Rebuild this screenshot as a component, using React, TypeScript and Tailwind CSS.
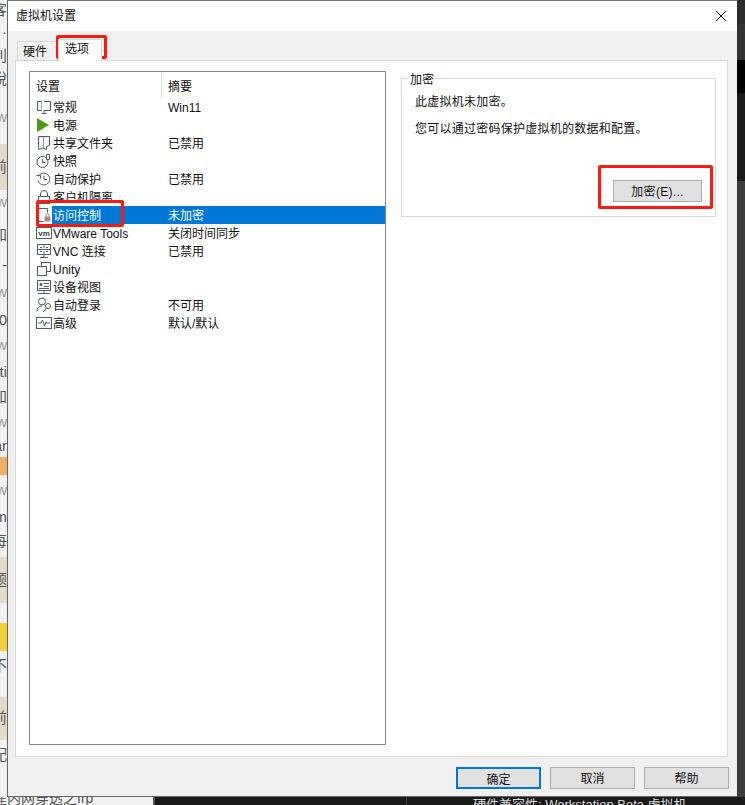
import React from 'react';

const ink = '#4d5b6a';

const icons: Record<string, React.ReactNode> = {
  general: (
    <>
      <path d="M1.5 2.5h4M1.5 2.5v9h4M8 2.5h6.5v9H8M5.5 14.5h5M8 11.5v3" fill="none" stroke={ink} />
      <path d="M5.5 2.5v9" stroke="#9fb0c0" />
    </>
  ),
  power: <polygon points="1,1 13,8 1,15" fill="#4c9a0f" />,
  share: (
    <>
      <path d="M2.5 1.5h11v9l-3 1v3l-4-1.5-4 1.5z" fill="#f4f6f8" stroke={ink} />
      <path d="M7.5 2v11" stroke="#8d9aa6" />
    </>
  ),
  snapshot: (
    <>
      <circle cx="6.5" cy="9" r="5.5" fill="#fff" stroke={ink} />
      <path d="M6.5 6v3.5h3" fill="none" stroke={ink} />
      <path d="M10.5 1.5h3v5h-3z" fill="#fff" stroke={ink} />
    </>
  ),
  protect: (
    <>
      <path d="M3 4.5a6 6 0 1 1-1 5" fill="none" stroke={ink} />
      <path d="M0.5 4.5h4v3" fill="none" stroke={ink} />
      <path d="M8 4.5v4h3" fill="none" stroke={ink} />
    </>
  ),
  lock: (
    <>
      <rect x="2.5" y="7.5" width="11" height="7" fill="#fff" stroke={ink} />
      <path d="M4.5 7.5V5a3.5 3.5 0 0 1 7 0v2.5" fill="none" stroke={ink} />
    </>
  ),
  access: (
    <>
      <path d="M2.5 1.5h9v4M2.5 1.5v13h5" fill="none" stroke={ink} />
      <rect x="8.5" y="9.5" width="6" height="5" fill="#a58a8a" />
      <path d="M10 9.5V8a1.5 1.5 0 0 1 3 0v1.5" fill="none" stroke="#a58a8a" />
    </>
  ),
  tools: (
    <>
      <rect x="0.5" y="2.5" width="15" height="11" fill="#fff" stroke={ink} />
      <text x="8" y="10.5" textAnchor="middle" fontSize="8" fontWeight="700" fill="#33414f" fontFamily="Liberation Sans">vm</text>
    </>
  ),
  vnc: (
    <>
      <rect x="1.5" y="1.5" width="13" height="10" fill="#fff" stroke={ink} />
      <path d="M1.5 6.5h13M8 2v3M8 8v3M4 14.5h8M8 11.5v3M4 4.5h2M10 4.5h2M4 8.5h2M10 8.5h2" fill="none" stroke={ink} />
    </>
  ),
  unity: (
    <>
      <rect x="5.5" y="1.5" width="9" height="9" fill="#fff" stroke={ink} />
      <rect x="1.5" y="5.5" width="9" height="9" fill="#fff" stroke={ink} />
    </>
  ),
  device: (
    <>
      <rect x="1.5" y="1.5" width="13" height="10" fill="#fff" stroke={ink} />
      <circle cx="5" cy="5.5" r="1.5" fill={ink} />
      <path d="M8 4.5h5M8 7.5h5M3 9.5h10M2 14.5h12M8 11.5v3" fill="none" stroke={ink} />
    </>
  ),
  login: (
    <>
      <circle cx="6" cy="4.5" r="3.5" fill="#fff" stroke={ink} />
      <path d="M1 14c0-3 2-5 5-5" fill="none" stroke={ink} />
      <circle cx="12" cy="9" r="2.5" fill="#fff" stroke={ink} />
      <path d="M10.5 11l-3.5 4M8 13l1.5 1" fill="none" stroke={ink} />
    </>
  ),
  advanced: (
    <>
      <rect x="0.5" y="2.5" width="15" height="11" fill="#fff" stroke={ink} />
      <path d="M2 8h3l1.5-3 2 6 1.5-4 1 1h3" fill="none" stroke={ink} />
    </>
  ),
};

const rows = [
  { icon: 'general', name: '常规', value: 'Win11' },
  { icon: 'power', name: '电源', value: '' },
  { icon: 'share', name: '共享文件夹', value: '已禁用' },
  { icon: 'snapshot', name: '快照', value: '' },
  { icon: 'protect', name: '自动保护', value: '已禁用' },
  { icon: 'lock', name: '客户机隔离', value: '' },
  { icon: 'access', name: '访问控制', value: '未加密', selected: true },
  { icon: 'tools', name: 'VMware Tools', value: '关闭时间同步' },
  { icon: 'vnc', name: 'VNC 连接', value: '已禁用' },
  { icon: 'unity', name: 'Unity', value: '' },
  { icon: 'device', name: '设备视图', value: '' },
  { icon: 'login', name: '自动登录', value: '不可用' },
  { icon: 'advanced', name: '高级', value: '默认/默认' },
];

const SettingRow = ({ icon, name, value, selected }: { icon: string; name: string; value: string; selected?: boolean }) => (
  <div className="flex h-[18px] items-center">
    <div className="flex h-[18px] w-[22px] shrink-0 items-center pl-[6px]">
      <svg width="16" height="16" viewBox="0 0 16 16">{icons[icon]}</svg>
    </div>
    <div className={`flex h-[18px] flex-1 items-center pt-[2px] ${selected ? 'bg-[#0078d7] text-white' : ''}`}>
      <span className="w-[116px] shrink-0 pl-px">{name}</span>
      <span>{value}</span>
    </div>
  </div>
);

const DialogButton = ({ label, primary }: { label: string; primary?: boolean }) => (
  <button className={`h-[22px] w-[85px] bg-[#e1e1e1] pt-[2px] text-center text-[12px] ${primary ? 'border-2 border-[#0078d7]' : 'border border-[#adadad]'}`}>
    {label}
  </button>
);

const Crumb = ({ cls, text }: { cls: string; text: string }) => (
  <div className={`flex items-center justify-end overflow-hidden whitespace-nowrap text-[15px] text-[#555] ${cls}`}>
    <span className="shrink-0">{text}</span>
  </div>
);

const App: React.FC = () => {
  return (
    <div className="relative flex h-[805px] w-[745px] flex-col overflow-hidden bg-[#1a1a1a] font-['Liberation_Sans','Noto_Sans_CJK_SC',sans-serif] text-[12px] text-[#111]">
      <div className="flex h-[797px] shrink-0">
        {/* page behind the dialog, only a sliver shows */}
        <div className="flex w-[7px] shrink-0 flex-col bg-[#f1f1f1]">
          <Crumb cls="h-[20px]" text="客" />
          <Crumb cls="h-[25px]" text="·" />
          <Crumb cls="h-[23px]" text="利" />
          <Crumb cls="h-[22px]" text="說" />
          <Crumb cls="h-[54px] text-[#999]" text="w" />
          <Crumb cls="h-[46px] bg-[#e4dccb]" text="前" />
          <Crumb cls="h-[25px] text-[#999]" text="w" />
          <Crumb cls="h-[40px]" text="加" />
          <Crumb cls="h-[20px]" text="-" />
          <Crumb cls="h-[35px] text-[#999]" text="w" />
          <Crumb cls="h-[20px]" text="0" />
          <Crumb cls="h-[30px] text-[#999]" text="w" />
          <Crumb cls="h-[25px]" text="ti" />
          <Crumb cls="h-[25px]" text="加" />
          <Crumb cls="h-[25px] text-[#999]" text="w" />
          <Crumb cls="h-[22px]" text="ar" />
          <div className="h-[18px] bg-[#f0b060]" />
          <Crumb cls="h-[30px] text-[#999]" text="w" />
          <Crumb cls="h-[25px]" text="m" />
          <Crumb cls="h-[22px]" text="每" />
          <Crumb cls="h-[5px]" text="" />
          <Crumb cls="h-[46px] bg-[#e4dccb]" text="题" />
          <div className="h-[20px]" />
          <div className="h-[28px] bg-[#f2cf3a]" />
          <Crumb cls="h-[30px]" text="不" />
          <div className="h-[16px]" />
          <Crumb cls="h-[43px] bg-[#e4dccb]" text="前" />
          <Crumb cls="h-[30px]" text="配" />
        </div>

        <div className="flex w-[730px] shrink-0 flex-col border-t border-b border-l border-t-[#777] border-b-[#666] border-l-[#666] bg-[#f0f0f0]">
          <div className="flex h-[30px] shrink-0 items-center justify-between bg-white pl-[8px] pr-[9px]">
            <span>虚拟机设置</span>
            <svg width="12" height="12" viewBox="0 0 12 12" className="mr-px">
              <path d="M1 1l10 10M11 1L1 11" stroke="#111" fill="none" />
            </svg>
          </div>

          <div className="flex h-[29px] shrink-0 items-end pl-[9px]">
            <div className="flex h-[19px] w-[41px] items-center border-t border-l border-r border-[#d9d9d9] bg-[#f0f0f0] pl-[5px] pt-[2px]">硬件</div>
            <div className="relative top-px z-10 flex h-[22px] w-[44px] items-center border-l border-r border-t border-[#d9d9d9] bg-white pb-[3px] pl-[6px]">选项</div>
          </div>

          <div className="ml-[7px] flex h-[697px] w-[713px] shrink-0 border border-[#d9d9d9] bg-white">
            <div className="ml-[13px] mt-[10px] flex h-[674px] w-[357px] shrink-0 flex-col border border-[#828790]">
              <div className="flex h-[26px] shrink-0 items-center">
                <div className="flex h-[24px] w-[132px] items-center border-r border-[#d9d9d9] pl-[6px] pt-[4px]">设置</div>
                <div className="pl-[6px] pt-[4px]">摘要</div>
              </div>
              {rows.map(r => (
                <SettingRow key={r.name} {...r} />
              ))}
            </div>

            <div className="relative ml-[15px] mt-[17px] flex h-[139px] w-[315px] shrink-0 flex-col border border-[#d9d9d9] px-[13px] pt-[14px]">
              <span className="absolute -top-[8px] left-[7px] bg-white px-px">加密</span>
              <p className="leading-[18px] tracking-[0.25px]">此虚拟机未加密。</p>
              <p className="mt-[9px] leading-[18px] tracking-[0.25px]">您可以通过密码保护虚拟机的数据和配置。</p>
              <button className="mb-[14px] mt-auto h-[22px] w-[89px] self-end border border-[#adadad] bg-[#e1e1e1] pt-px text-center tracking-[0.3px]">加密(E)...</button>
            </div>
          </div>

          <div className="flex flex-1 items-start justify-end gap-[9px] pr-[8px] pt-[10px]">
            <DialogButton label="确定" primary />
            <DialogButton label="取消" />
            <DialogButton label="帮助" />
          </div>
        </div>

        <div className="flex w-[8px] shrink-0 flex-col">
          <div className="h-[24px] bg-[#2d2d2d]" />
          <div className="h-[36px] bg-[#333]" />
          <div className="h-[33px] bg-black" />
          <div className="h-[88px] bg-[#1a1a1a]" />
          <div className="flex-1 bg-[#3c3c3c]" />
        </div>
      </div>

      <div className="flex h-[8px] shrink-0 overflow-hidden whitespace-nowrap text-[13px] leading-[16px]">
        <div className="w-[153px] shrink-0 overflow-hidden bg-[#f1f1f1] text-[14px] text-[#555]">
          <div className="-ml-[7px] -mt-[7px]">建内网穿透之frp</div>
        </div>
        <div className="w-[2px] shrink-0 bg-[#555]" />
        <div className="ml-[251px] w-px shrink-0 bg-[#444]" />
        <div className="ml-[66px] text-[#ddd]">硬件兼容性: Workstation Beta 虚拟机</div>
      </div>

      {/* red marks someone drew on the screenshot */}
      <div className="absolute left-[56px] top-[35px] h-[24px] w-[51px] rounded-[2px] border-[3px] border-[#fb1a0f]" />
      <div className="absolute left-[36px] top-[200px] h-[27px] w-[88px] rounded-[2px] border-[3px] border-[#fb1a0f]" />
      <div className="absolute left-[598px] top-[165px] h-[44px] w-[115px] rounded-[2px] border-[3px] border-[#fb1a0f]" />
    </div>
  );
};

export default App;
